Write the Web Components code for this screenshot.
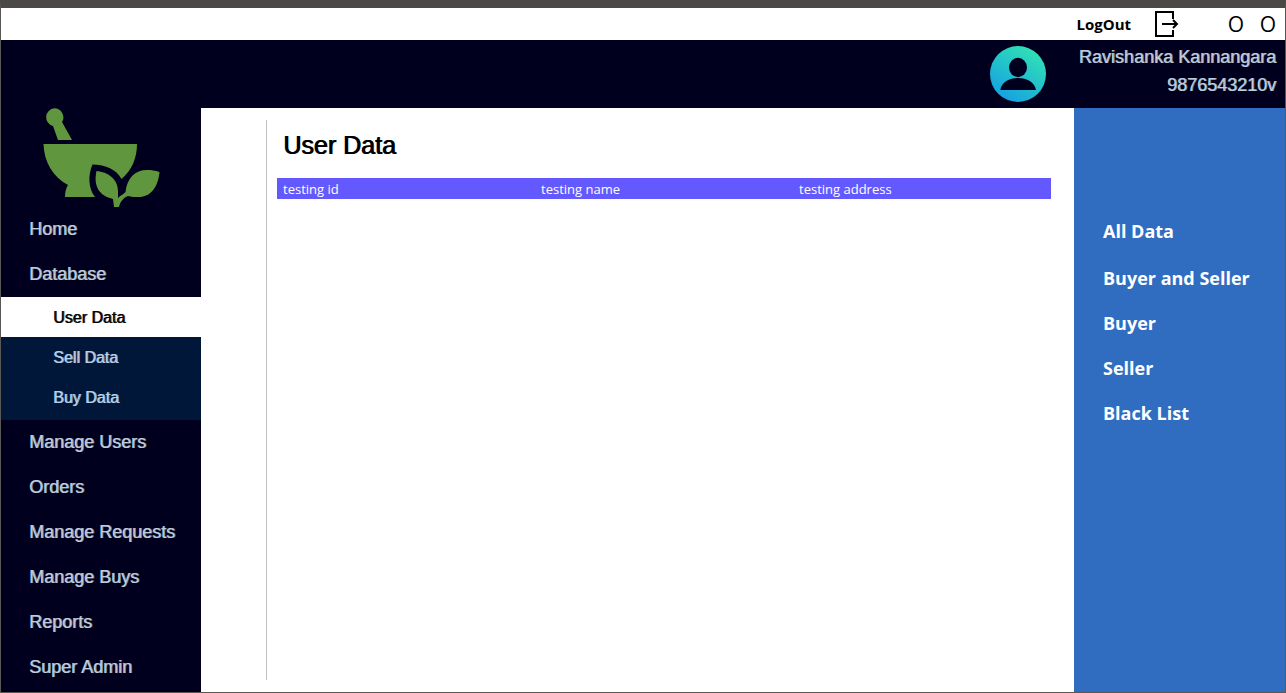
<!DOCTYPE html>
<html lang="en">
<head>
<meta charset="utf-8">
<title>User Data</title>
<style>
html, body { margin: 0; height: 100%; }
body { font-family: "Liberation Sans", Arial, sans-serif; background: #fff; color: #000; }
</style>
</head>
<body>
<app-window>
  <title-bar slot="title"></title-bar>
  <user-banner slot="banner" name="Ravishanka Kannangara" nic="9876543210v"></user-banner>
  <side-nav slot="nav">
    <nav-item>Home</nav-item>
    <nav-item>Database</nav-item>
    <nav-group>
      <nav-item sub active>User Data</nav-item>
      <nav-item sub>Sell Data</nav-item>
      <nav-item sub>Buy Data</nav-item>
    </nav-group>
    <nav-item>Manage Users</nav-item>
    <nav-item>Orders</nav-item>
    <nav-item>Manage Requests</nav-item>
    <nav-item>Manage Buys</nav-item>
    <nav-item>Reports</nav-item>
    <nav-item>Super Admin</nav-item>
  </side-nav>
  <data-panel heading="User Data" columns="testing id|testing name|testing address"></data-panel>
  <filter-menu slot="filters">
    <filter-item>All Data</filter-item>
    <filter-item>Buyer and Seller</filter-item>
    <filter-item>Buyer</filter-item>
    <filter-item>Seller</filter-item>
    <filter-item>Black List</filter-item>
  </filter-menu>
</app-window>
<script>
const define = (name, render) => customElements.define(name, class extends HTMLElement {
  constructor() {
    super();
    this.attachShadow({ mode: "open" });
  }
  connectedCallback() {
    this.shadowRoot.innerHTML = render(this);
  }
});

define("app-window", () => `
<style>
:host { display: flex; flex-direction: column; min-height: 100vh; box-sizing: border-box;
  border: 1px solid #5a5855; border-top: 8px solid #4b4946; }
.body { display: flex; flex: 1; }
main { flex: 1; min-width: 0; display: flex; background: #fff; }
</style>
<slot name="title"></slot>
<slot name="banner"></slot>
<div class="body">
  <slot name="nav"></slot>
  <main><slot></slot></main>
  <slot name="filters"></slot>
</div>`);

define("title-bar", () => `
<style>
:host { display: flex; align-items: center; justify-content: flex-end; height: 32px; padding-right: 1px;
  background: #fff; font-family: "Open Sans", "Noto Sans", sans-serif; }
button { border: 0; padding: 0; background: none; color: #000; font: inherit; display: flex; align-items: center; }
.logout { font-size: 15px; font-weight: 700; gap: 24px; margin-right: 41px; }
.win { width: 32px; justify-content: center; font-size: 21px; line-height: 32px; }
svg { display: block; }
</style>
<button class="logout">LogOut
  <svg width="24" height="26" viewBox="0 0 24 26" fill="none" stroke="#000" stroke-width="2" aria-hidden="true">
    <path d="M18 8V1H1V25H18V19M7 13H22M18 9L22 13L18 17"/>
  </svg>
</button>
<button class="win">O</button>
<button class="win">O</button>`);

define("user-banner", el => `
<style>
:host { display: flex; align-items: center; justify-content: flex-end; gap: 33px; height: 68px;
  padding-right: 9px; background: #00001e; color: #bfcddb; font-size: 18px; line-height: 28px;
  text-align: right; text-shadow: 1px 0 rgba(191, 205, 219, .7); }
svg { display: block; }
.who { padding-bottom: 6px; }
</style>
<svg width="56" height="56" viewBox="0 0 56 56" aria-hidden="true">
  <defs><linearGradient id="g" x1="0.2" y1="0.95" x2="0.8" y2="0.05">
    <stop offset="0" stop-color="#16a0e4"/><stop offset="1" stop-color="#30e2b2"/></linearGradient></defs>
  <circle cx="28" cy="28" r="28" fill="url(#g)"/>
  <ellipse cx="28" cy="21.500" rx="9" ry="9.700" fill="#00001e"/>
  <path d="M10.300 44C11.500 36 19 32 28 32S44.500 36 46 44Z" fill="#00001e"/>
</svg>
<div class="who">
  <div>${el.getAttribute("name")}</div>
  <div>${el.getAttribute("nic")}</div>
</div>`);

define("side-nav", () => `
<style>
:host { display: block; width: 200px; flex: none; background: #00001e; }
svg { display: block; margin-left: 41px; }
</style>
<svg width="118" height="99" viewBox="42 108 118 99" fill="#60963d" aria-hidden="true">
  <path d="M54.300 108.300A9 9 0 0 1 62 122L72 140H58L53 126A9 9 0 0 1 54.300 108.300Z"/>
  <path d="M43.500 144H137C137 158 132 170 121.500 179C116 169 106 165 92.500 164.500C88 175 88 188 95 197H65C65 192 66 188 68 185C53 177 44 162 43.500 144Z"/>
  <path d="M96.500 171C108 172 118 179 118 191V198C121 195 124 194 125.500 192C127 178 135 170 147 170C151 170 155 170.500 159.500 172C158 188 150 197 139 197C135 197 131 197 128 196C123 198 120 202 119 207H114L113 199C100 196 93 187 96.500 171Z"/>
</svg>
<nav aria-label="Main"><slot></slot></nav>`);

define("nav-group", () => `
<style>
:host { display: block; background: #001739; padding-bottom: 3px; }
</style>
<slot></slot>`);

define("nav-item", () => `
<style>
:host { display: block; }
a { display: block; padding-left: 28px; font-size: 18px; line-height: 45px; color: #bfcddb;
  text-decoration: none; text-shadow: 1px 0 rgba(191, 205, 219, .7); }
:host([sub]) a { padding: 2px 0 0 52px; font-size: 16px; line-height: 38px; color: #b8d0e8;
  text-shadow: 1px 0 rgba(184, 208, 232, .8); }
:host([sub][active]) a { background: #fff; color: #000; text-shadow: 1px 0 rgba(0, 0, 0, .8); }
</style>
<a href="#"><slot></slot></a>`);

define("data-panel", el => `
<style>
:host { display: block; flex: 1; margin: 12px 23px 12px 65px; padding-left: 10px; border-left: 1px solid #c0c0c0; }
h1 { margin: 10px 0 18px 6px; font-size: 25px; line-height: 30px; font-weight: 400; text-shadow: 1px 0 #000; }
table { width: 100%; table-layout: fixed; border-collapse: collapse; background: #6459ff; color: #fff; }
td { padding: 2px 6px 0; font: 13px/19px "Open Sans", "Noto Sans", sans-serif; }
</style>
<h1>${el.getAttribute("heading")}</h1>
<table><tbody><tr>${el.getAttribute("columns").split("|").map(c => `<td>${c}</td>`).join("")}</tr></tbody></table>`);

define("filter-menu", () => `
<style>
:host { display: block; width: 211px; flex: none; box-sizing: border-box; padding-top: 101px; background: #306dc0; }
</style>
<nav aria-label="Filter"><slot></slot></nav>`);

define("filter-item", () => `
<style>
:host { display: block; }
:host(:first-child) { margin-bottom: 2px; }
a { display: block; padding-left: 29px; color: #fff; text-decoration: none;
  font: 700 18px/45px "Open Sans", "Noto Sans", sans-serif; }
</style>
<a href="#"><slot></slot></a>`);
</script>
</body>
</html>
